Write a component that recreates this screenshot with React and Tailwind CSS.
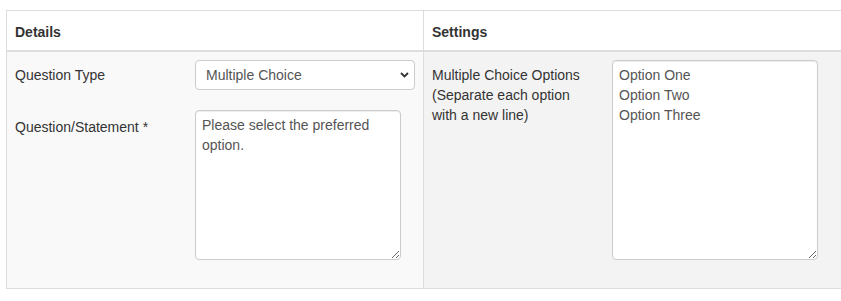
import { useState } from 'react'

// Two-panel question editor, Bootstrap-ish table look
export default function App() {
  const [type, setType] = useState('Multiple Choice')

  return (
    <div className="h-[301px] w-[841px] overflow-hidden bg-white pl-[6px] pt-[10px] font-['Liberation_Sans',Arial,sans-serif] text-[14px] leading-[20px] text-[#333]">
      <div className="w-[835px] border-l border-t border-b border-[#ddd]">
        {/* Header */}
        <div className="grid grid-cols-[416px_1fr] border-b-2 border-[#ddd]">
          <div className="flex h-[39px] items-end px-2 pb-2 font-bold">Details</div>
          <div className="flex h-[39px] items-end border-l border-[#ddd] px-2 pb-2 font-bold">Settings</div>
        </div>

        {/* Body */}
        <div className="grid h-[236px] grid-cols-[416px_1fr]">
          <div className="bg-[#f9f9f9] px-2 pt-2">
            <div className="mb-5 flex">
              <label className="w-[180px] shrink-0 pt-[5px]">Question Type</label>
              <div className="relative">
                <select
                  value={type}
                  onChange={(e) => setType(e.target.value)}
                  className="h-[30px] w-[220px] appearance-none rounded-[4px] border border-[#ccc] bg-white pl-[10px] pr-6 text-[14px] text-[#555] outline-none"
                >
                  <option>Multiple Choice</option>
                  <option>True / False</option>
                  <option>Free Text</option>
                </select>
                <svg
                  className="pointer-events-none absolute right-[6px] top-[12px]"
                  width="9"
                  height="6"
                  viewBox="0 0 9 6"
                  fill="none"
                >
                  <path d="M1 1L4.5 4.5L8 1" stroke="#333" strokeWidth="1.8" />
                </svg>
              </div>
            </div>
            <div className="flex">
              <label className="w-[180px] shrink-0 pt-[7px]">Question/Statement *</label>
              <textarea
                defaultValue="Please select the preferred option."
                className="h-[150px] w-[206px] rounded-[4px] border border-[#ccc] bg-white px-[6px] py-[4px] text-[14px] leading-[20px] text-[#555] shadow-[inset_0_1px_1px_rgba(0,0,0,0.075)] outline-none"
              />
            </div>
          </div>

          <div className="border-l border-[#ddd] bg-[#f3f3f3] px-2 pt-2">
            <div className="flex">
              <label className="w-[180px] shrink-0 pr-4 pt-[5px]">
                Multiple Choice Options (Separate each option with a new line)
              </label>
              <textarea
                defaultValue={'Option One\nOption Two\nOption Three'}
                className="h-[200px] w-[206px] rounded-[4px] border border-[#ccc] bg-white px-[6px] py-[4px] text-[14px] leading-[20px] text-[#555] shadow-[inset_0_1px_1px_rgba(0,0,0,0.075)] outline-none"
              />
            </div>
          </div>
        </div>
      </div>
    </div>
  )
}
